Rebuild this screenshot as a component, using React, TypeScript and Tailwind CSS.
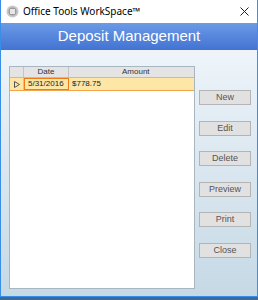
import React from "react";

function Btn({ label }: { label: string }) {
  return (
    <div className="w-[52px] h-[15px] bg-[#e1e1e1] border border-[#b4b4b4] flex items-center justify-center text-[9px] text-[#555] leading-none">
      {label}
    </div>
  );
}

export default function App() {
  return (
    <div className="w-[258px] h-[300px] bg-[#3d6a9a] overflow-hidden" style={{ fontFamily: '"Liberation Sans", Arial, sans-serif' }}>
      <div className="w-[258px] h-[297px] border-x border-b border-[#3a8ee6] flex flex-col bg-white">
        {/* title bar */}
        <div className="h-[23px] flex items-center bg-white shrink-0">
          <svg width="13" height="13" viewBox="0 0 13 13" className="ml-[5px]">
            <circle cx="6.5" cy="6.5" r="6" fill="#c8c8c8" />
            <circle cx="6.5" cy="6.5" r="4" fill="#9a9a9a" />
            <rect x="4" y="4" width="5" height="5" fill="#e6e6e6" />
          </svg>
          <span className="ml-[4px] text-[10px] text-black" style={{ fontFamily: '"Noto Sans", sans-serif' }}>Office Tools WorkSpace™</span>
          <svg width="9" height="9" viewBox="0 0 9 9" className="ml-auto mr-[8px]">
            <path d="M0.5 0.5 L8.5 8.5 M8.5 0.5 L0.5 8.5" stroke="#222" strokeWidth="1" />
          </svg>
        </div>
        {/* header */}
        <div className="h-[27px] shrink-0 bg-gradient-to-b from-[#6b9ae6] to-[#4373d2] flex items-center justify-center text-white text-[15px]">
          Deposit Management
        </div>
        {/* content */}
        <div className="flex-1 bg-gradient-to-b from-[#eef4fa] to-[#c5d9e5] flex pt-[16px] pl-[8px] pr-[6px] pb-[7px]">
          <div className="w-[186px] bg-white border border-[#a9b6c2] flex flex-col">
            <div className="h-[11px] flex bg-[#e4e4e4] border-b border-[#bcbcbc] text-[8px] text-[#333] leading-none">
              <div className="w-[14px] border-r border-[#c4c4c4]" />
              <div className="w-[45px] border-r border-[#c4c4c4] flex items-center justify-center">Date</div>
              <div className="flex-1 flex items-center pl-[53px]">Amount</div>
            </div>
            <div className="h-[13px] flex bg-[#fde6a6] border-b border-[#f2a64a] text-[8px] text-[#222] leading-none">
              <div className="w-[14px] flex items-center justify-center border-r border-[#e8c27a]">
                <svg width="6" height="7" viewBox="0 0 6 7">
                  <path d="M0.5 0.5 L5.5 3.5 L0.5 6.5 Z" fill="none" stroke="#555" strokeWidth="1" />
                </svg>
              </div>
              <div className="w-[45px] border border-[#f07c18] flex items-center pl-[3px]">5/31/2016</div>
              <div className="flex-1 flex items-center pl-[3px]">$778.75</div>
            </div>
          </div>
          <div className="flex-1 flex flex-col items-end pt-[24px] gap-[15.5px]">
            <Btn label="New" />
            <Btn label="Edit" />
            <Btn label="Delete" />
            <Btn label="Preview" />
            <Btn label="Print" />
            <Btn label="Close" />
          </div>
        </div>
      </div>
    </div>
  );
}
